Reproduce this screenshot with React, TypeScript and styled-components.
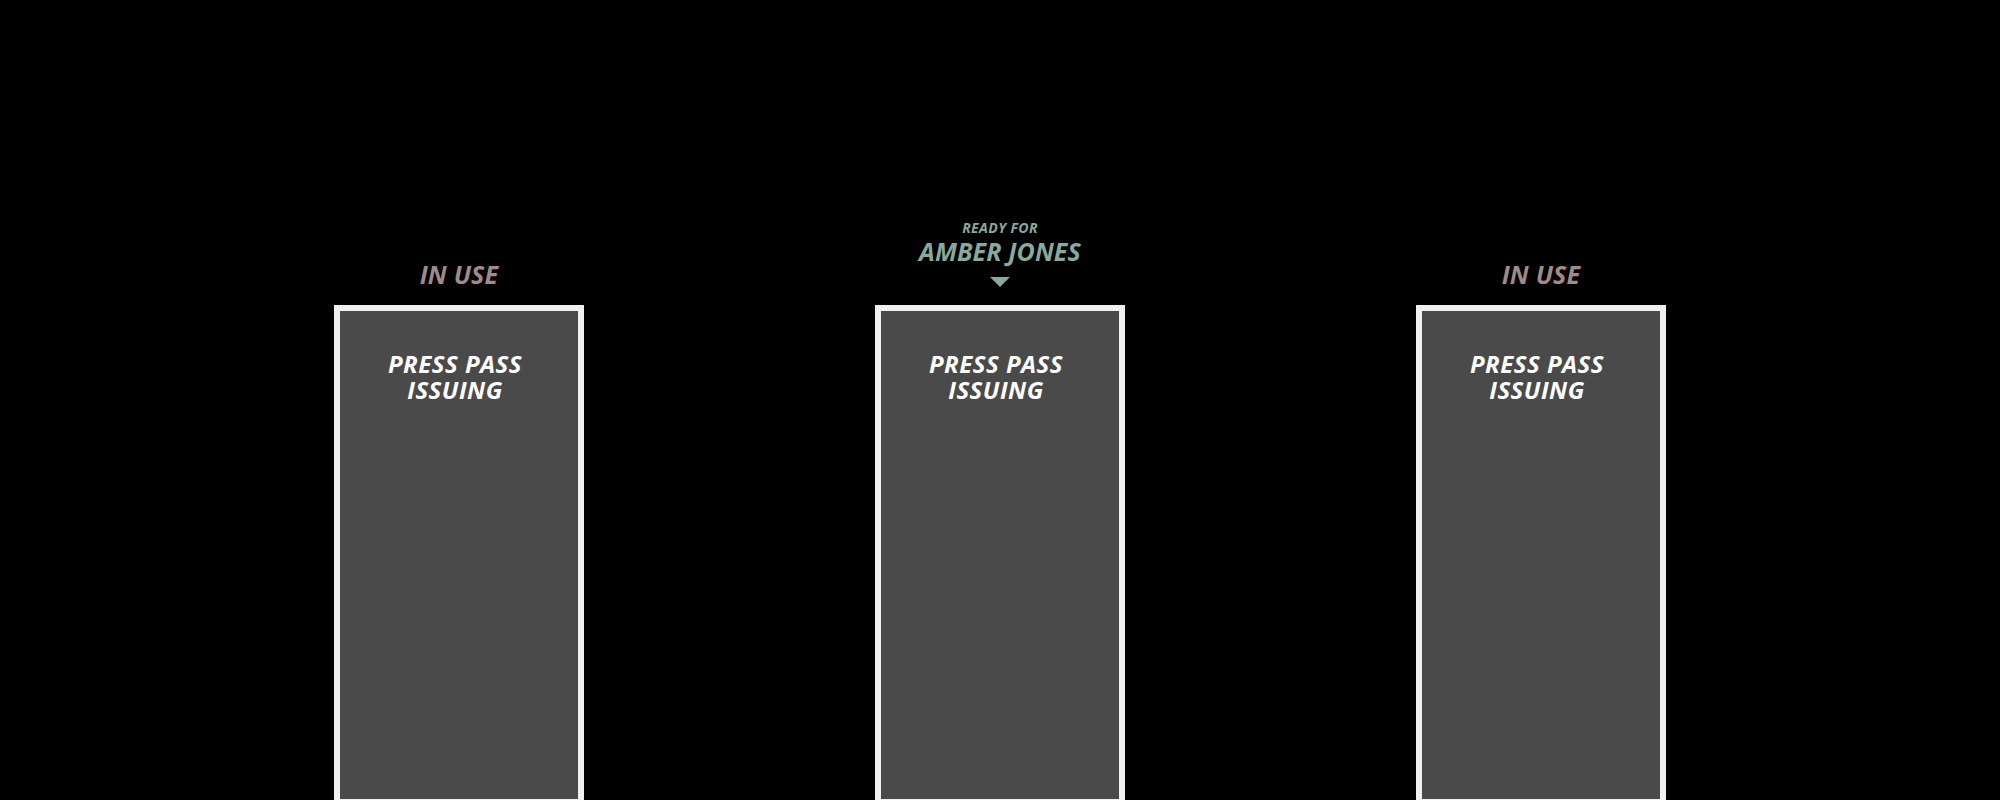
import styled, {createGlobalStyle} from "styled-components";

type Station = {
    id: number;
    readyFor?: string;
}

const stations: Station[] = [
    {id: 1},
    {id: 2, readyFor: "AMBER JONES"},
    {id: 3},
]

const GlobalStyle = createGlobalStyle`
  html, body {
    margin: 0;
    padding: 0;
    background: #000;
    overflow: hidden;
  }

  body {
    font-family: "Open Sans", "Liberation Sans", sans-serif;
  }
`

const Page = styled.div`
  width: 100%;
  height: 800px;
  display: flex;
  justify-content: center;
  gap: 291px;
  background: #000;
  overflow: hidden;
`

const Column = styled.div`
  width: 250px;
  flex-shrink: 0;
  display: flex;
  flex-direction: column;
`

const Header = styled.div<{ $pad: number }>`
  height: 305px;
  flex-shrink: 0;
  display: flex;
  flex-direction: column;
  align-items: center;
  justify-content: flex-end;
  padding-bottom: ${p => p.$pad}px;
  box-sizing: border-box;
  font-style: italic;
  font-weight: 700;
`

const InUse = styled.div`
  font-size: 25px;
  line-height: 30px;
  color: #a08a8a;
  letter-spacing: 0.2px;
`

const ReadyLabel = styled.div`
  font-size: 14px;
  line-height: 16px;
  color: #8aa89b;
  letter-spacing: 0.4px;
`

const ReadyName = styled.div`
  font-size: 25px;
  line-height: 30px;
  color: #8aa89b;
  letter-spacing: 0.1px;
`

const Arrow = styled.div`
  width: 0;
  height: 0;
  margin-top: 11px;
  margin-bottom: 1px;
  border-left: 10px solid transparent;
  border-right: 10px solid transparent;
  border-top: 10px solid #8aa89b;
`

const Card = styled.div`
  height: 500px;
  flex-shrink: 0;
  box-sizing: border-box;
  border: 6px solid #f0f0f0;
  background: #4a4a4a;
  padding: 40px 8px 0 0;
  display: flex;
  justify-content: center;
  align-items: flex-start;
`

const CardTitle = styled.div`
  width: 160px;
  text-align: center;
  color: #fff;
  font-size: 24px;
  line-height: 26px;
  font-weight: 700;
  font-style: italic;
  letter-spacing: 0.5px;
`

export default function App() {
    return (
        <>
            <GlobalStyle/>
            <Page>
                {stations.map(s => (
                    <Column key={s.id}>
                        <Header $pad={s.readyFor ? 17 : 16}>
                            {s.readyFor ? (
                                <>
                                    <ReadyLabel>READY FOR</ReadyLabel>
                                    <ReadyName>{s.readyFor}</ReadyName>
                                    <Arrow/>
                                </>
                            ) : (
                                <InUse>IN USE</InUse>
                            )}
                        </Header>
                        <Card>
                            <CardTitle>PRESS PASS ISSUING</CardTitle>
                        </Card>
                    </Column>
                ))}
            </Page>
        </>
    );
}
